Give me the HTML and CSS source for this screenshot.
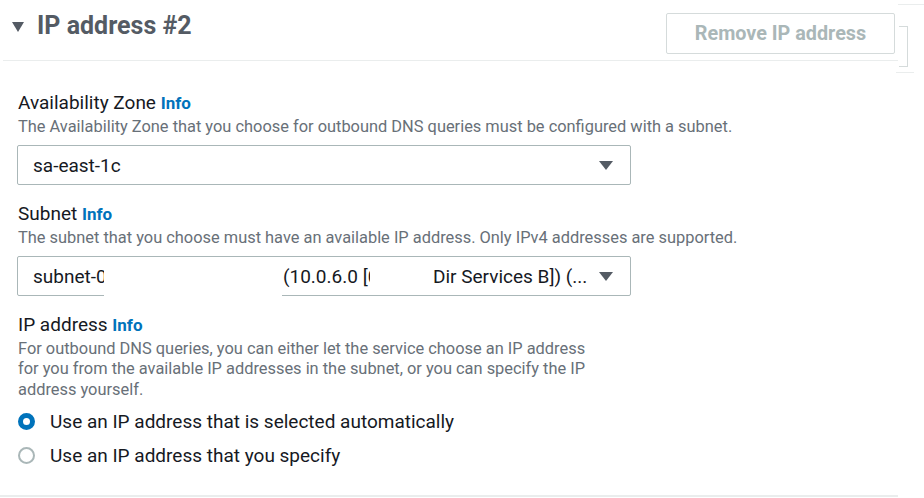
FILE: index.html
```html
<!DOCTYPE html>
<html lang="en">
<head>
<meta charset="utf-8">
<title>IP address #2</title>
<link rel="stylesheet" href="styles.css">
</head>
<body>
<div class="page">
  <section class="panel">
    <header class="panel-header">
      <div class="heading">
        <span class="expander" aria-hidden="true"></span>
        <h2 class="title">IP address #2</h2>
      </div>
      <button class="btn-remove" type="button" disabled>Remove IP address</button>
    </header>
    <div class="panel-body">
      <div class="field">
        <div class="label">Availability Zone <a class="info">Info</a></div>
        <div class="desc">The Availability Zone that you choose for outbound DNS queries must be configured with a subnet.</div>
        <div class="select">
          <span class="select-text">sa-east-1c</span>
          <span class="caret"></span>
        </div>
      </div>
      <div class="field">
        <div class="label">Subnet <a class="info">Info</a></div>
        <div class="desc">The subnet that you choose must have an available IP address. Only IPv4 addresses are supported.</div>
        <div class="select select-subnet">
          <span class="seg seg-a">subnet-0f</span>
          <span class="seg seg-b">(10.0.6.0 [0</span>
          <span class="seg seg-c">Dir Services B]) (...</span>
          <span class="caret"></span>
          <span class="redact"></span>
        </div>
      </div>
      <div class="field">
        <div class="label">IP address <a class="info">Info</a></div>
        <div class="desc desc-narrow">For outbound DNS queries, you can either let the service choose an IP address for you from the available IP addresses in the subnet, or you can specify the IP address yourself.</div>
        <div class="radios">
          <label class="radio"><span class="dot dot-on"></span><span>Use an IP address that is selected automatically</span></label>
          <label class="radio"><span class="dot"></span><span>Use an IP address that you specify</span></label>
        </div>
      </div>
    </div>
  </section>
  <span class="edge edge-top"></span>
  <span class="edge edge-bracket"></span>
  <span class="edge edge-low"></span>
</div>
</body>
</html>
```
FILE: styles.css
```css
* { box-sizing: border-box; }
html, body { margin: 0; padding: 0; background: #fff; }
body {
  font-family: Roboto, "Liberation Sans", Arial, sans-serif;
  color: #16191f;
  width: 924px;
  height: 498px;
  overflow: hidden;
}
.page { position: relative; width: 924px; height: 498px; }
.panel {
  width: 898px;
  border-bottom: 2px solid #eaeded;
}
.panel-header {
  display: flex;
  justify-content: space-between;
  align-items: flex-start;
  height: 61px;
  margin-left: 3px;
  border-bottom: 1px solid #eaeded;
}
.heading {
  display: flex;
  align-items: center;
  padding-top: 9px;
  padding-left: 9px;
}
.expander {
  width: 0; height: 0;
  border-left: 6.5px solid transparent;
  border-right: 6.5px solid transparent;
  border-top: 10px solid #545b64;
  margin-right: 13px;
  margin-top: 1px;
}
.title {
  margin: 0;
  font-size: 25px;
  line-height: 34px;
  font-weight: 700;
  color: #545b64;
}
.btn-remove {
  margin-top: 13px;
  margin-right: 3px;
  width: 229px;
  height: 41px;
  border: 1px solid #d5dbdb;
  border-radius: 2px;
  background: #fff;
  color: #aab7b8;
  font-family: inherit;
  font-size: 19.8px;
  font-weight: 700;
  padding: 0;
}
.panel-body {
  padding: 31px 0 25px 18px;
}
.field + .field { margin-top: 18px; }
.label {
  height: 22px;
  font-size: 19px;
  line-height: 22px;
  color: #16191f;
}
.info {
  color: #0073bb;
  font-weight: 700;
  font-size: 17px;
  line-height: 22px;
}
.desc {
  margin-top: 3px;
  font-size: 16.4px;
  line-height: 20px;
  color: #687078;
}
.desc-narrow { width: 578px; line-height: 20.3px; }
.select {
  position: relative;
  margin-top: 8px;
  margin-left: -1px;
  width: 614px;
  height: 40px;
  border: 1px solid #aab7b8;
  border-radius: 2px;
  display: flex;
  align-items: center;
  padding-left: 15px;
  font-size: 19px;
}
.select-text { flex: 1; }
.caret {
  margin-left: auto;
  margin-right: 17px;
  flex: none;
  width: 0; height: 0;
  border-left: 7px solid transparent;
  border-right: 7px solid transparent;
  border-top: 9px solid #545b64;
}
.seg { white-space: nowrap; overflow: hidden; flex: none; }
.seg-a { width: 71px; }
.seg-b { width: 87px; margin-left: 179px; }
.seg-c { margin-left: 63px; }
.redact {
  position: absolute;
  left: 86px;
  bottom: -2px;
  width: 178px;
  height: 4px;
  background: #fff;
}
.radios { margin-top: 8px; }
.radio {
  display: flex;
  align-items: center;
  height: 28px;
  font-size: 19px;
  color: #16191f;
}
.radio + .radio { margin-top: 6px; }
.dot {
  width: 17px; height: 17px;
  border-radius: 50%;
  border: 2px solid #aab7b8;
  margin-right: 15px;
  flex: none;
}
.dot-on { border: 5px solid #0073bb; background: #fff; }
.edge { position: absolute; display: block; }
.edge-top { left: 898px; top: 4px; width: 26px; height: 1px; background: #eaeded; }
.edge-bracket {
  left: 899px; top: 26px; width: 9px; height: 41px;
  border: 1px solid #d5dbdb; border-left: none;
}
.edge-low { left: 896px; top: 72px; width: 18px; height: 1px; background: #eaeded; }
```
